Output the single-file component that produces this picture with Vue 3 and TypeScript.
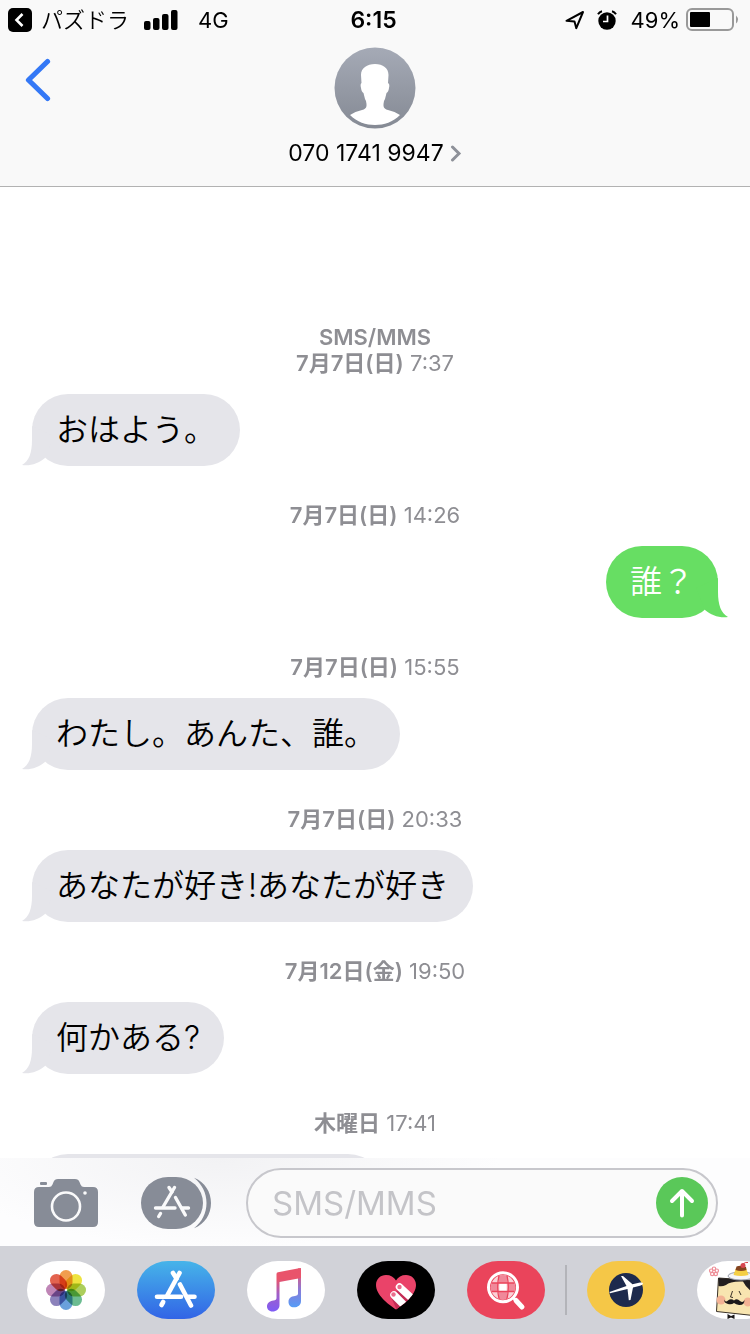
<script setup lang="ts">
import { ref } from 'vue'

interface Message {
  service?: string
  day: string
  time: string
  text: string
  mine: boolean
}

const messages: Message[] = [
  { service: 'SMS/MMS', day: '7月7日(日)', time: '7:37', text: 'おはよう。', mine: false },
  { day: '7月7日(日)', time: '14:26', text: '誰？', mine: true },
  { day: '7月7日(日)', time: '15:55', text: 'わたし。あんた、誰。', mine: false },
  { day: '7月7日(日)', time: '20:33', text: 'あなたが好き!あなたが好き', mine: false },
  { day: '7月12日(金)', time: '19:50', text: '何かある?', mine: false },
  { day: '木曜日', time: '17:41', text: '', mine: false },
]

const petals = ['#f0923a', '#ece02a', '#a3c94a', '#5cb585', '#5a96d8', '#7f74b4', '#b878ae', '#e0523c']
const draft = ref('')
</script>

<template>
  <div class="screen">
    <header class="top">
      <div class="status">
        <div class="status-left">
          <button class="return" type="button">
            <svg width="24" height="24" viewBox="0 0 24 24" aria-hidden="true">
              <rect width="24" height="24" rx="5" fill="#000" />
              <path d="M14.500 6 L8.500 12 L14.500 18" fill="none" stroke="#fff" stroke-width="2.600" />
            </svg>
            <span>パズドラ</span>
          </button>
          <svg width="34" height="22" viewBox="0 0 34 22" aria-hidden="true">
            <rect x="0" y="12" width="6.500" height="9" rx="2" />
            <rect x="9" y="9" width="6.500" height="12" rx="2" />
            <rect x="18" y="5" width="6.500" height="16" rx="2" />
            <rect x="27" y="1" width="6.500" height="20" rx="2" />
          </svg>
          <span class="network">4G</span>
        </div>
        <div class="clock">6:15</div>
        <div class="status-right">
          <svg width="20" height="20" viewBox="0 0 20 20" aria-hidden="true">
            <path d="M1.500 10.800 L18 2 L11.300 18.200 L9.500 11.500 Z" fill="none" stroke="#000" stroke-width="2" stroke-linejoin="round" />
          </svg>
          <svg class="alarm" width="20" height="20" viewBox="0 0 20 20" aria-hidden="true">
            <circle cx="10" cy="11" r="8.700" />
            <path d="M1 4.200 Q2.500 1.800 5 1.200 M19 4.200 Q17.500 1.800 15 1.200" fill="none" stroke="#000" stroke-width="2" />
            <path d="M10.500 5.500 V11.500 H6" fill="none" stroke="#fff" stroke-width="1.700" />
          </svg>
          <span>49%</span>
          <svg class="battery" width="53" height="24" viewBox="0 0 53 24" aria-hidden="true">
            <rect x="1" y="1" width="46" height="21" rx="5" fill="none" stroke="#999" stroke-width="2" />
            <rect x="4" y="4" width="20" height="15" rx="1" />
            <path d="M50 7.500 Q54 11.500 50 15.500 Z" fill="#999" />
          </svg>
        </div>
      </div>
      <nav class="nav">
        <button class="back" type="button" aria-label="戻る">
          <svg width="28" height="44" viewBox="0 0 28 44" aria-hidden="true">
            <path d="M23.500 3.500 L4.500 22 L23.500 40.500" fill="none" stroke="#3478f6" stroke-width="5.200" stroke-linecap="round" stroke-linejoin="round" />
          </svg>
        </button>
        <button class="contact" type="button">
          <svg width="82" height="82" viewBox="0 0 82 82" aria-hidden="true">
            <defs>
              <linearGradient id="avatar" x1="0" y1="0" x2="0" y2="1">
                <stop offset="0" stop-color="#a5aab6" />
                <stop offset="1" stop-color="#858a94" />
              </linearGradient>
            </defs>
            <circle cx="41" cy="41" r="40.500" fill="url(#avatar)" />
            <path d="M41 17 C49 17 54.500 21 54.500 28 L54 36 Q56 37 55 41 Q54.500 45 52.500 46 L51 52 Q49.500 54 49.500 57 L49.500 59 Q50 62 54 63 Q61 64.500 66 68 C59 75 50 78 41 78 C32 78 23 75 16 68 Q21 64.500 28 63 Q32 62 32.500 59 L32.500 57 Q32.500 54 31 52 L29.500 46 Q27.500 45 27 41 Q26 37 27.500 36 L27 28 C27 21 33 17 41 17 Z" fill="#fff" />
          </svg>
          <span class="number">
            070 1741 9947
            <svg width="12" height="18" viewBox="0 0 12 18" aria-hidden="true">
              <path d="M2.500 3 L9 9.500 L2.500 16" fill="none" stroke="#8e9199" stroke-width="3" stroke-linecap="round" />
            </svg>
          </span>
        </button>
      </nav>
    </header>

    <main class="thread">
      <section v-for="(m, i) in messages" :key="i" class="entry">
        <p class="stamp">
          <strong v-if="m.service" class="service">{{ m.service }}</strong>
          <strong>{{ m.day }}</strong> {{ m.time }}
        </p>
        <div class="bubble" :class="{ mine: m.mine, cut: !m.text }">
          {{ m.text }}
          <svg class="tail" width="36" height="40" viewBox="0 0 36 40" aria-hidden="true">
            <path d="M10 0 V14 C10 27 7 35 0 39 C8 40.500 17 37 23 32 L32 10 Z" fill="currentColor" />
          </svg>
        </div>
      </section>
    </main>

    <form class="composer" @submit.prevent>
      <button class="camera" type="button" aria-label="カメラ">
        <svg width="64" height="48" viewBox="0 0 64 48" aria-hidden="true">
          <path d="M5 8 H15 Q17.500 8 18.500 5.500 L19.500 3 Q20.500 0 24 0 H41 Q44.500 0 45.500 3 L46.500 5.500 Q47.500 8 50 8 H59 Q64 8 64 13 V43 Q64 48 59 48 H5 Q0 48 0 43 V13 Q0 8 5 8 Z" fill="#878c97" />
          <rect x="6" y="3" width="7" height="3" rx="1" fill="#878c97" />
          <circle cx="32" cy="27.500" r="14" fill="none" stroke="#fafafb" stroke-width="2.600" />
          <circle cx="51" cy="14" r="1.800" fill="#fafafb" />
        </svg>
      </button>
      <button class="apps" type="button" aria-label="App">
        <svg width="70" height="52" viewBox="0 0 70 52" aria-hidden="true">
          <rect width="62" height="52" rx="27" ry="26" fill="#878c97" />
          <path d="M53 .700 C64 5 70 15 70 26 S64 47 53 51.300 C61 45 65.500 36 65.500 26 S61 7 53 .700 Z" fill="#878c97" />
          <g fill="none" stroke="#fafafb" stroke-width="3.400" stroke-linecap="round">
            <path d="M33.500 10.500 L22 30" />
            <path d="M28 10.500 L31 15 M34.500 20.500 L44.300 38" />
            <path d="M14.500 31 H34 M41 31 H47.500" />
            <path d="M19.500 36.500 L17.700 39.500" />
          </g>
        </svg>
      </button>
      <div class="field">
        <input v-model="draft" type="text" placeholder="SMS/MMS" aria-label="SMS/MMS" />
        <button type="submit" aria-label="送信">
          <svg width="52" height="52" viewBox="0 0 52 52" aria-hidden="true">
            <circle cx="26" cy="26" r="26" fill="#5ac859" />
            <path d="M26 38.500 V14 M16 24 L26 14 L36 24" fill="none" stroke="#fff" stroke-width="4" stroke-linecap="round" stroke-linejoin="round" />
          </svg>
        </button>
      </div>
    </form>

    <footer class="tray">
      <div class="group">
        <button class="app" type="button" aria-label="写真">
          <svg width="78" height="58" viewBox="0 0 78 58" aria-hidden="true">
            <rect width="78" height="58" rx="31" ry="29" fill="#fff" />
            <g transform="translate(39 29)">
              <rect v-for="(c, i) in petals" :key="c" class="petal" x="-6.500" y="-20" width="13" height="19" rx="6.500" :fill="c" :transform="`rotate(${i * 45})`" />
            </g>
          </svg>
        </button>
        <button class="app" type="button" aria-label="App Store">
          <svg width="78" height="58" viewBox="0 0 78 58" aria-hidden="true">
            <defs>
              <linearGradient id="store" x1="0" y1="0" x2="0" y2="1">
                <stop offset="0" stop-color="#46b4e9" />
                <stop offset="1" stop-color="#3264e6" />
              </linearGradient>
            </defs>
            <rect width="78" height="58" rx="31" ry="29" fill="url(#store)" />
            <g fill="none" stroke="#fff" stroke-width="4.600" stroke-linecap="round">
              <path d="M42.500 12 L30.500 34" />
              <path d="M36 12 L39.500 17.500 M43 23.500 L54 44.500" />
              <path d="M20 35.700 H44 M51.500 35.700 H57.500" />
              <path d="M26.200 41 L24.500 44" />
            </g>
          </svg>
        </button>
        <button class="app" type="button" aria-label="ミュージック">
          <svg width="78" height="58" viewBox="0 0 78 58" aria-hidden="true">
            <defs>
              <linearGradient id="left-note" x1="0" y1="0" x2="0" y2="1">
                <stop offset=".25" stop-color="#e9546b" />
                <stop offset=".6" stop-color="#a05fc8" />
                <stop offset="1" stop-color="#7e5cf5" />
              </linearGradient>
              <linearGradient id="right-note" x1="0" y1="0" x2="0" y2="1">
                <stop offset=".15" stop-color="#dd5a80" />
                <stop offset=".55" stop-color="#8a7ad8" />
                <stop offset="1" stop-color="#559df7" />
              </linearGradient>
            </defs>
            <rect width="78" height="58" rx="31" ry="29" fill="#fff" />
            <path d="M51 7.500 L54 7 V40 C54 44 51 46.300 47 46.300 C43.500 46.300 41.500 44 41.500 41 C41.500 37 44 35.500 48 35 Q51 34.700 51 33 Z" fill="url(#right-note)" />
            <path d="M29.500 13 Q29.500 11.500 31 11.200 L52 7.300 Q54 7 54 9 V17 L32.500 21 V44 C32.500 48 29.500 50.500 25.500 50.500 C22 50.500 20 48 20 45.500 C20 42 22.500 40 26.500 39.500 Q29.500 39 29.500 37 Z" fill="url(#left-note)" />
          </svg>
        </button>
        <button class="app" type="button" aria-label="Digital Touch">
          <svg width="78" height="58" viewBox="0 0 78 58" aria-hidden="true">
            <defs>
              <clipPath id="heart">
                <path d="M39 48.500 C31 43 19 34 19 24 C19 18 23.500 14 29 14 C33.500 14 37 16 39 19.500 C41 16 44.500 14 49 14 C54.500 14 59 18 59 24 C59 34 47 43 39 48.500 Z" />
              </clipPath>
            </defs>
            <rect width="78" height="58" rx="31" ry="29" fill="#000" />
            <g clip-path="url(#heart)">
              <rect x="18" y="12" width="42" height="38" fill="#ea4369" />
              <path d="M34 36 L43 27 L62 46 L42 54 Z" fill="#c42c55" />
              <g fill="none" stroke="#fff" stroke-width="7.500" stroke-linecap="round">
                <path d="M37 34 L56 53 M42.500 26 L62 44" />
              </g>
              <circle cx="36.500" cy="33.500" r="2.200" fill="#ea6d8c" />
              <circle cx="42.500" cy="26" r="2.200" fill="#ea6d8c" />
            </g>
          </svg>
        </button>
        <button class="app" type="button" aria-label="画像検索">
          <svg width="78" height="58" viewBox="0 0 78 58" aria-hidden="true">
            <defs>
              <clipPath id="lens">
                <circle cx="36" cy="26.300" r="12.200" />
              </clipPath>
            </defs>
            <rect width="78" height="58" rx="31" ry="29" fill="#ea445b" />
            <g clip-path="url(#lens)">
              <rect x="22" y="12" width="28" height="28" fill="#fbd0d6" />
              <path d="M32.500 22.500 H39.500 V30 H32.500 Z" fill="#fff" />
              <path d="M32 12 H40 V22 H32 Z M32 31 H40 V41 H32 Z M22 22 H31 V31 H22 Z M41 22 H50 V31 H41 Z" fill="#f0899a" />
              <path d="M22 22 H50 M22 30.500 H50 M32.500 12 Q29 26 32.500 40 M39.500 12 Q43 26 39.500 40" fill="none" stroke="#ea445b" stroke-width="1.300" />
            </g>
            <circle cx="36" cy="26.300" r="14.500" fill="none" stroke="#fff" stroke-width="3" />
            <path d="M46.500 37 L48.500 39" stroke="#fff" stroke-width="3" />
            <path d="M49 39.500 L55 46" stroke="#fff" stroke-width="5" stroke-linecap="round" />
          </svg>
        </button>
      </div>
      <div class="divider"></div>
      <div class="group">
        <button class="app" type="button" aria-label="Expedia">
          <svg width="78" height="58" viewBox="0 0 78 58" aria-hidden="true">
            <rect width="78" height="58" rx="31" ry="29" fill="#f5c747" />
            <circle cx="39" cy="29" r="17" fill="#1d2a4d" />
            <path d="M22.500 31 L39.500 25 L34 15 L36 15 L45.500 23.300 L53 21.500 Q56 21.300 56 22.500 Q56 24 53 24.800 L46 26.500 L43.500 39 L41.800 39.300 L40.500 28 L23 32.300 Z" fill="#fff" />
          </svg>
        </button>
        <button class="app" type="button" aria-label="スタンプ">
          <svg width="78" height="58" viewBox="0 0 78 58" aria-hidden="true">
            <rect width="78" height="58" rx="31" ry="29" fill="#fff" />
            <g fill="none" stroke="#ee8f98" stroke-width="1.200">
              <circle cx="17" cy="7.700" r="1.700" /><circle cx="19.800" cy="9.700" r="1.700" />
              <circle cx="18.800" cy="13" r="1.700" /><circle cx="15.200" cy="13" r="1.700" />
              <circle cx="14.200" cy="9.700" r="1.700" />
            </g>
            <path d="M21.500 17 L58 19.500 L56 54.500 L19.500 50.500 Z" fill="#f8e5b0" stroke="#3a3228" stroke-width="1" />
            <path d="M21.500 17 L58 19.500 L57 32 Q49 27 46 20.500 Q33 20 29 24 Q25 26 21.500 25 Z" fill="#221f20" />
            <circle cx="24" cy="39" r="4.500" fill="#f3b294" />
            <circle cx="51" cy="41" r="4.500" fill="#f3b294" />
            <path d="M35.500 30 L33.500 36 L36 36.500 M42 30 L44 34" fill="none" stroke="#3a3228" stroke-width="1" />
            <path d="M27 38.500 Q28.500 42 31 39.500 Q34 37 37 39.500 Q40 37 43 40 Q46 42.500 47.500 39 Q47.500 44.500 42 44 Q39 43.500 37 42 Q34.500 44 31 43 Q27 42 27 38.500 Z" fill="#1c191a" />
            <path d="M30.500 53 L34 55 L37.500 53.500 V58 L34 56.500 L30.500 58 Z" fill="#1c191a" />
            <ellipse cx="44" cy="15" rx="13" ry="4" fill="#f6f6f8" stroke="#9ba0ad" stroke-width="1" />
            <path d="M39 7 H49 L51.500 14 Q44 16 36.500 14 Z" fill="#f5cf45" />
            <path d="M39.500 5.500 Q44 4 49 6 L49.500 9 Q44 11 38.500 9 Z" fill="#84431f" />
            <circle cx="46" cy="4.500" r="2.500" fill="#d7464f" />
            <path d="M46 3 Q48 1 51 1.500" fill="none" stroke="#d7464f" stroke-width="1" />
          </svg>
        </button>
      </div>
    </footer>
  </div>
</template>

<style>
body {
  margin: 0;
  background: #fff;
}
</style>

<style scoped>
.screen {
  display: flex;
  flex-direction: column;
  height: 100vh;
  overflow: hidden;
  background: #fff;
  color: #000;
  font-family: Inter, "Noto Sans CJK JP", sans-serif;
}

svg {
  display: block;
  flex: none;
}

button {
  padding: 0;
  border: 0;
  background: none;
  color: inherit;
  font: inherit;
  cursor: pointer;
}

.top {
  flex: none;
  border-bottom: 1px solid #b2b2b2;
  background: #f9f9f9;
}

.status {
  display: grid;
  grid-template-columns: 1fr auto 1fr;
  align-items: center;
  height: 40px;
  padding: 0 11px 0 8px;
  font-size: 22px;
  line-height: 40px;
}

.status-left,
.status-right,
.return {
  display: flex;
  align-items: center;
}

.return {
  gap: 9px;
  margin-right: 15px;
  font-weight: 350;
}

.network {
  margin-left: 20px;
}

.clock {
  font-size: 23px;
  font-weight: 600;
}

.status-right {
  justify-content: flex-end;
}

.alarm {
  margin: 0 14px 0 12px;
}

.battery {
  margin-left: 6px;
}

.nav {
  display: grid;
  grid-template-columns: 1fr auto 1fr;
  align-items: start;
  height: 146px;
  padding: 0 24px;
}

.back {
  justify-self: start;
  margin-top: 18px;
}

.contact {
  display: flex;
  flex-direction: column;
  align-items: center;
  gap: 8px;
  margin-top: 7px;
}

.number {
  display: flex;
  align-items: center;
  gap: 6px;
  font-size: 23px;
  line-height: 32px;
}

.thread {
  flex: 1;
  min-height: 0;
  padding-top: 101px;
  overflow: hidden;
}

.entry {
  display: flex;
  flex-direction: column;
  align-items: flex-start;
  padding: 36px 32px 0;
}

.stamp {
  align-self: stretch;
  margin: 0 0 18px;
  color: #8e8e93;
  font-size: 22px;
  line-height: 26px;
  text-align: center;
}

.stamp strong {
  font-weight: 600;
}

.stamp .service {
  display: block;
}

.bubble {
  position: relative;
  box-sizing: border-box;
  min-height: 72px;
  padding: 12px 24px;
  border-radius: 36px;
  background: #e5e5ea;
  font-size: 32px;
  font-weight: 350;
  font-kerning: none;
  line-height: 48px;
}

.bubble.mine {
  align-self: flex-end;
  background: #67de63;
  color: #fff;
}

.bubble.cut {
  width: 352px;
}

.tail {
  position: absolute;
  bottom: 0;
  left: -10px;
  color: #e5e5ea;
}

.mine .tail {
  right: -10px;
  left: auto;
  color: #67de63;
  transform: scaleX(-1);
}

.composer {
  display: flex;
  flex: none;
  align-items: center;
  padding: 10px 32px 8px 34px;
  background: radial-gradient(ellipse 280px 90px at 220px 0, #f2f2f4, #fdfdfe);
}

.apps {
  margin: 0 35px 0 43px;
}

.field {
  display: flex;
  flex: 1;
  align-items: center;
  box-sizing: border-box;
  min-width: 0;
  height: 70px;
  padding: 0 8px 0 24px;
  border: 2px solid #c7c7cc;
  border-radius: 35px;
  background: #fafafa;
}

.field input {
  flex: 1;
  min-width: 0;
  padding: 0;
  border: 0;
  outline: 0;
  background: none;
  color: #000;
  font: inherit;
  font-size: 33px;
}

.field input::placeholder {
  color: #c4c4c8;
  opacity: 1;
}

.tray {
  display: flex;
  flex: none;
  gap: 20px;
  align-items: center;
  height: 88px;
  padding-left: 27px;
  overflow: hidden;
  background: #d1d2d8;
}

.group {
  display: flex;
  flex: none;
  gap: 32px;
}

.divider {
  flex: none;
  width: 2px;
  height: 50px;
  background: #b3b4b9;
}

.petal {
  mix-blend-mode: multiply;
  opacity: 0.9;
}
</style>
